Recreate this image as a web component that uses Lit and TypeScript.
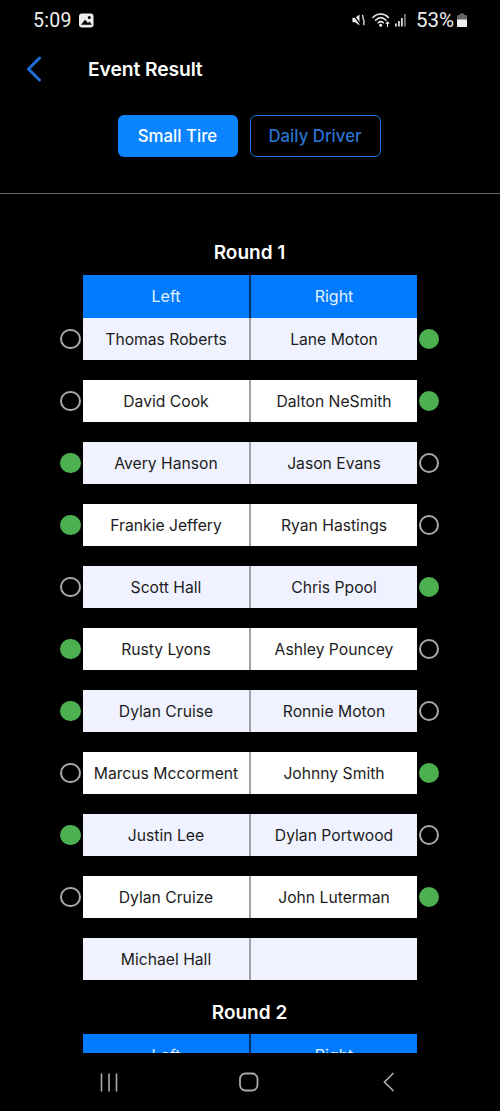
import { LitElement, html, css, svg } from "lit";
import { customElement } from "lit/decorators.js";

type Row = { l: string; r: string; win?: "l" | "r" };
const round1: Row[] = [
  { l: "Thomas Roberts", r: "Lane Moton", win: "r" },
  { l: "David Cook", r: "Dalton NeSmith", win: "r" },
  { l: "Avery Hanson", r: "Jason Evans", win: "l" },
  { l: "Frankie Jeffery", r: "Ryan Hastings", win: "l" },
  { l: "Scott Hall", r: "Chris Ppool", win: "r" },
  { l: "Rusty Lyons", r: "Ashley Pouncey", win: "l" },
  { l: "Dylan Cruise", r: "Ronnie Moton", win: "l" },
  { l: "Marcus Mccorment", r: "Johnny Smith", win: "r" },
  { l: "Justin Lee", r: "Dylan Portwood", win: "l" },
  { l: "Dylan Cruize", r: "John Luterman", win: "r" },
  { l: "Michael Hall", r: "" },
];

@customElement("app-root")
export class AppRoot extends LitElement {
  static styles = css`
    :host { display: block; width: 500px; height: 1111px; background: #000; color: #fff; font-family: Inter, "Liberation Sans", sans-serif; overflow: hidden; }
    .page { height: 1111px; display: flex; flex-direction: column; }
    .status { height: 40px; flex: none; display: flex; align-items: center; justify-content: space-between; padding: 0 33px; font-family: Roboto, sans-serif; font-size: 20.5px; color: #eee; }
    .status > div { display: flex; align-items: center; }
    .time { font-size: 19.5px; margin-right: 7px; letter-spacing: .3px; }
    .pct { margin: 0 3px 0 8px; }
    .mute { margin-right: 6px; }
    .wifi { margin-right: 4px; }
    .topbar { height: 58px; flex: none; display: flex; align-items: center; padding-left: 25px; }
    .title { margin-left: 44px; padding-bottom: 1px; font-size: 19.3px; font-weight: 600; letter-spacing: -.1px; }
    .tabs { flex: none; display: flex; justify-content: center; gap: 12px; margin-top: 17px; padding: 0 2px 36px 0; border-bottom: 1px solid #666; }
    .tab { box-sizing: border-box; height: 42px; display: flex; align-items: center; justify-content: center; border-radius: 6px; font-size: 16.8px; font-weight: 500; }
    .tab.on { width: 120px; background: #0a84ff; color: #fff; }
    .tab.off { width: 131px; border: 1.5px solid #2474d8; color: #2a72cf; }
    .scroll { flex: 1; min-height: 0; overflow: hidden; padding-top: 46px; }
    h2 { margin: 0; padding-right: 1px; text-align: center; font-size: 19px; font-weight: 600; line-height: 26px; }
    h2.next { margin-top: 20px; margin-bottom: 8px; }
    .row { display: grid; grid-template-columns: 23px 167px 167px 23px; width: 380px; margin: 0 auto; align-items: center; }
    .row.first { margin-top: 9px; }
    .row.data { margin-bottom: 20px; }
    .row.last { margin-bottom: 0; }
    .head { box-sizing: border-box; height: 43px; padding-bottom: 1px; background: #007bff; display: flex; align-items: center; justify-content: center; font-size: 16px; color: #e4f0ff; }
    .head.a { border-right: 1px solid #0b2f66; }
    .head.b { border-left: 1px solid #0b2f66; }
    .cell { height: 42px; display: flex; align-items: center; justify-content: center; font-size: 15.7px; color: #1c1c22; background: #fff; box-sizing: border-box; white-space: nowrap; }
    .odd .cell { background: #f0f3ff; }
    .cell.a { border-right: 1px solid #a0a0a8; }
    .cell.b { border-left: 1px solid #a0a0a8; }
    .dot { box-sizing: border-box; width: 20.5px; height: 20.5px; border-radius: 50%; border: 2px solid #a8a8a8; }
    .dot.right { justify-self: end; margin-right: .7px; }
    .dot.win { background: #4caf50; border: none; }
    .nav { height: 58px; flex: none; display: flex; align-items: center; justify-content: space-between; padding: 0 105px 0 100px; }
    .nav svg { display: block; }
    .home { margin-right: 3px; }
  `;

  private dot(on: boolean, side: string, show: boolean) {
    if (!show) return html`<span></span>`;
    return html`<span class="dot ${side} ${on ? "win" : ""}"></span>`;
  }

  render() {
    return html`<div class="page">
      <div class="status">
        <div>
          <span class="time">5:09</span>
          <svg width="15" height="15" viewBox="0 0 15 15"><rect x="0" y="0.5" width="14.5" height="14" rx="3" fill="#eee"/><circle cx="10.3" cy="4.6" r="1.5" fill="#000"/><path d="M2 11.8 L6 6.8 L9 10 L10.6 8.4 L12.8 11.8Z" fill="#000"/></svg>
        </div>
        <div>
          <svg class="mute" width="14" height="14" viewBox="0 0 15 14"><path d="M0.5 4.5H3.5L8 1V13L3.5 9.5H0.5Z" fill="#eee"/><path d="M1 1L10 13" stroke="#000" stroke-width="1.4"/><path d="M11 1.5C13 3.5 10.5 5 12.5 7C14 9 11.5 10.5 13 12.5" fill="none" stroke="#eee" stroke-width="1.4"/></svg>
          <svg class="wifi" width="19" height="16" viewBox="0 0 19 16">
            ${svg`<g fill="none" stroke="#eee" stroke-width="1.5" stroke-linecap="round"><path d="M1 5.5C5.5 .8 12 .8 16.5 5.5"/><path d="M3.6 8.2C6.8 5 10.7 5 13.9 8.2"/><path d="M6.2 10.8C7.8 9.3 9.7 9.3 11.3 10.8"/></g><circle cx="8.7" cy="13.3" r="1.5" fill="#eee"/><path d="M15.5 10V15M13.8 11.7L15.5 10L17.2 11.7" stroke="#eee" stroke-width="1.1" fill="none"/>`}
          </svg>
          <svg width="13" height="14" viewBox="0 0 13 14">
            <rect x="0" y="10.5" width="1.8" height="3" fill="#ddd"/><rect x="3" y="8" width="1.8" height="5.5" fill="#ddd"/><rect x="6" y="5" width="1.8" height="8.5" fill="#ddd"/><rect x="9" y="1" width="1.8" height="12.5" fill="#777"/>
          </svg>
          <span class="pct">53%</span>
          <svg width="10" height="14" viewBox="0 0 10 14"><path d="M3 0.5H7V2H9A1 1 0 0 1 10 3V13A1 1 0 0 1 9 14H1A1 1 0 0 1 0 13V3A1 1 0 0 1 1 2H3Z" fill="#666"/><path d="M0 6.5H10V13A1 1 0 0 1 9 14H1A1 1 0 0 1 0 13Z" fill="#eee"/></svg>
        </div>
      </div>
      <div class="topbar">
        <svg width="19" height="26" viewBox="0 0 19 26"><path d="M14.5 2L3.5 13L14.5 24" fill="none" stroke="#1d70d8" stroke-width="3" stroke-linecap="round" stroke-linejoin="round"/></svg>
        <div class="title">Event Result</div>
      </div>
      <div class="tabs">
        <div class="tab on">Small Tire</div>
        <div class="tab off">Daily Driver</div>
      </div>
      <div class="scroll">
        <h2>Round 1</h2>
        <div class="row first">
          <span></span><div class="head a">Left</div><div class="head b">Right</div><span></span>
        </div>
        ${round1.map((r, i) => html`<div class="row data ${i % 2 === 0 ? "odd" : ""} ${i === round1.length - 1 ? "last" : ""}">
          ${this.dot(r.win === "l", "", !!r.win)}
          <div class="cell a">${r.l}</div>
          <div class="cell b">${r.r}</div>
          ${this.dot(r.win === "r", "right", !!r.win)}
        </div>`)}
        <h2 class="next">Round 2</h2>
        <div class="row">
          <span></span><div class="head a">Left</div><div class="head b">Right</div><span></span>
        </div>
      </div>
      <div class="nav">
        <svg width="18" height="19" viewBox="0 0 18 19"><path d="M1.5 0.5V18.5M9 0.5V18.5M16.5 0.5V18.5" stroke="#aaa" stroke-width="1.6"/></svg>
        <svg class="home" width="20" height="20" viewBox="0 0 20 20"><rect x="1" y="1.5" width="17.5" height="17" rx="5.5" fill="none" stroke="#aaa" stroke-width="1.8"/></svg>
        <svg width="12" height="20" viewBox="0 0 12 20"><path d="M10.5 1L1.5 10L10.5 19" fill="none" stroke="#aaa" stroke-width="1.7"/></svg>
      </div>
    </div>`;
  }
}
